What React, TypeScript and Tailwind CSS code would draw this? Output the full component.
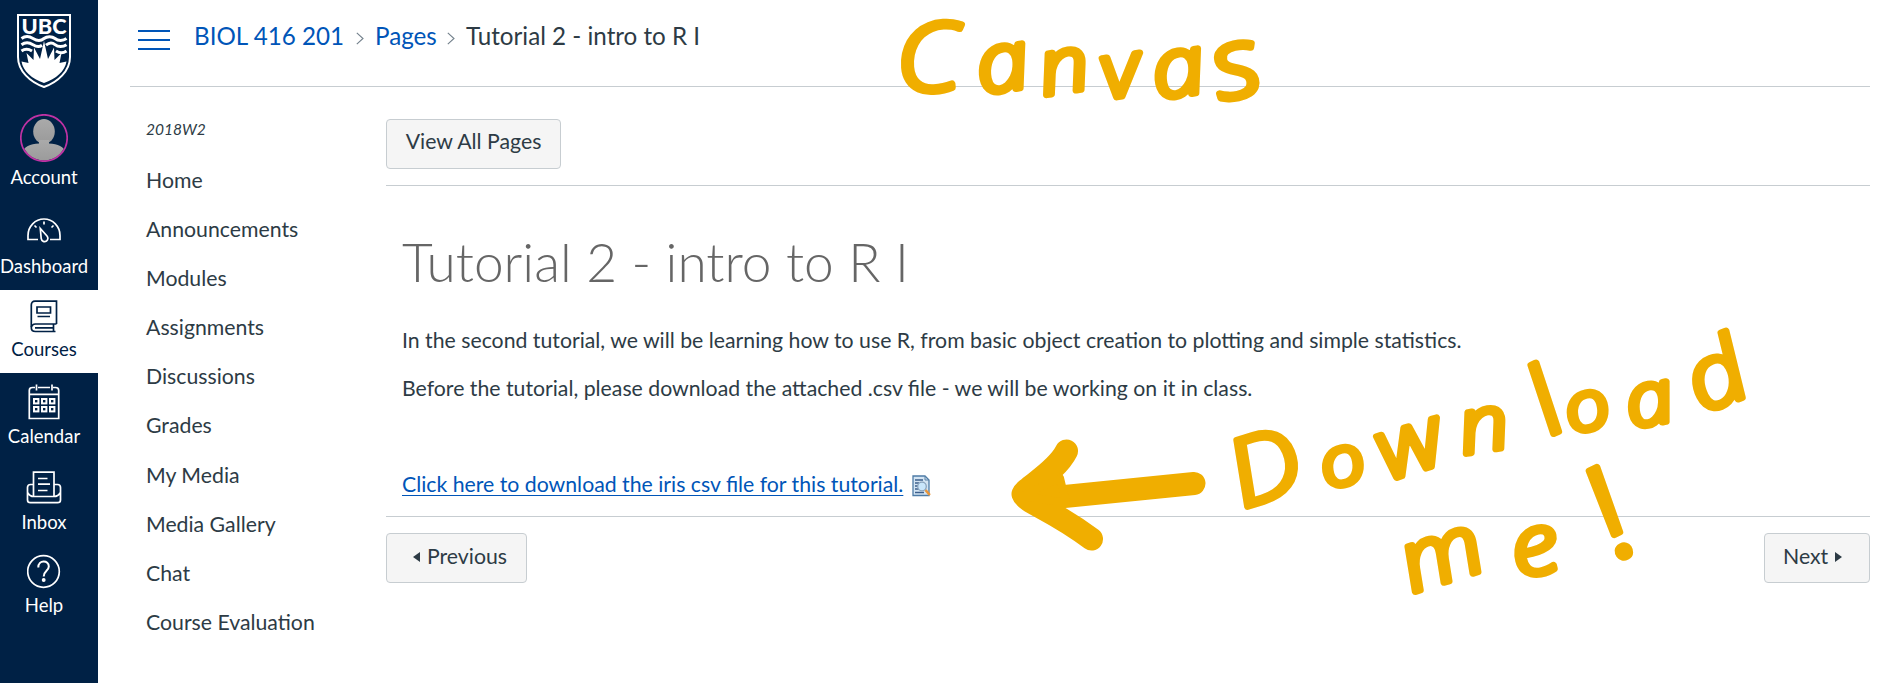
import type { ReactNode } from 'react';

const INK = '#f0ae00';

function Shield() {
  return (
    <svg width="56" height="76" viewBox="0 0 56 76" fill="none">
      <path d="M2 2H54V44C54 58 42 69 28 74C14 69 2 58 2 44Z" stroke="#fff" strokeWidth="2" />
      <text x="28" y="20.800" textAnchor="middle" fontFamily="Lato" fontWeight="900" fontSize="20.5" textLength="45" lengthAdjust="spacingAndGlyphs" fill="#fff">UBC</text>
      <g stroke="#fff" strokeWidth="3">
        <path d="M5.500 25.500C9 23 13 23 17 25.500S25 28 28 25.500S36 23 39 25.500S47 28 50.500 25.500" />
        <path d="M5.500 31.700C9 29.200 13 29.200 17 31.700S24 33.700 26 32.200M30 32.200C33 29.700 36 29.200 39 31.700S47 34.200 50.500 31.700" />
        <path d="M5.500 38C9 35.500 12 35.500 16 38M40 38C43 40 47 40.500 50.500 38" />
      </g>
      <path d="M28 28L32 46L38 34.500L38.500 47L45.500 40L43.500 50L50.500 48.500C49 58 40 66 28 70C16 66 7 58 5.500 48.500L12.500 50L10.500 40L17.500 47L18 34.500L24 46Z" fill="#fff" />
    </svg>
  );
}

function Avatar() {
  return (
    <svg width="48" height="48" viewBox="0 0 48 48">
      <defs>
        <clipPath id="face"><circle cx="24" cy="24" r="22.500" /></clipPath>
        <linearGradient id="grey" x1="0" y1="0" x2="0" y2="1">
          <stop offset="0" stopColor="#aaa" />
          <stop offset="1" stopColor="#9a9a9a" />
        </linearGradient>
      </defs>
      <g clipPath="url(#face)" fill="url(#grey)">
        <ellipse cx="24" cy="17.500" rx="10.800" ry="12.500" />
        <path d="M19 26H29V29.500C38 30 44 33 46 38V48H2V38C4 33 10 30 19 29.500Z" />
      </g>
      <circle cx="24" cy="24" r="23.200" fill="none" stroke="#bf32a4" strokeWidth="1.700" />
    </svg>
  );
}

function Gauge() {
  return (
    <svg width="36" height="25" viewBox="0 0 36 25" fill="none" stroke="#fff" strokeWidth="1.700">
      <path d="M12 21.500H2V17.500A16 16.500 0 0 1 34 17.500V21.500H24" />
      <path d="M18 3.500V6.500M8.500 7.500L10.500 9.500M27.500 7.500L25.500 9.500" />
      <path d="M14.300 10.500L15.200 20.500C15.700 23.500 18.500 24.300 20.500 23C22.300 21.700 22.200 19.500 21 18Z" />
    </svg>
  );
}

function Book() {
  return (
    <svg width="28" height="33" viewBox="0 0 28 33" fill="none" stroke="#002145" strokeWidth="1.700">
      <path d="M26.500 24V1.200H5C2.500 1.200 1.300 3 1.300 5V27" />
      <path d="M26.500 24H5.500C3 24 1.300 25.500 1.300 27.800S3 31.500 5.500 31.500H25.500M23.500 24V31.500M23 27.800H5" />
      <path d="M7 7H20.500V13H7ZM7.500 16.500H20" />
    </svg>
  );
}

function CalendarIcon() {
  const cells = [0, 8, 16].flatMap((x) => [0, 8].map((y) => [x, y]));
  return (
    <svg width="32" height="36" viewBox="0 0 32 36" fill="none" stroke="#fff" strokeWidth="1.700">
      <path d="M7 3.500H4.500C2.500 3.500 1.300 4.500 1.300 6.500V34.500H30.700V6.500C30.700 4.500 29.500 3.500 27.500 3.500H25M10 3.500H22M8.500 0.500V6.500M24 0.500V6.500M1.300 10.300H30.700" />
      {cells.map(([x, y]) => (
        <rect key={`${x}-${y}`} x={6 + x} y={15 + y} width="4.400" height="4.400" strokeWidth="2" />
      ))}
    </svg>
  );
}

function Tray() {
  return (
    <svg width="36" height="33" viewBox="0 0 36 33" fill="none" stroke="#fff" strokeWidth="1.700">
      <path d="M7.500 25.500V1.200H28V25.500M12 7.500H21.500M12 13.200H24M12 19.500H21.500" />
      <path d="M7.500 13.500H4.500C2.500 13.500 1.500 14.500 1.500 16.500V29C1.500 31 2.500 31.700 4.500 31.700H31.500C33.500 31.700 34.500 31 34.500 29V16.500C34.500 14.500 33.500 13.500 31.500 13.500H28M1.500 21.500C3 24 5 25.500 7.500 25.500H28C31 25.500 33 24 34.500 21.500" />
    </svg>
  );
}

function HelpIcon() {
  return (
    <svg width="35" height="35" viewBox="0 0 35 35" fill="none" stroke="#fff" strokeWidth="1.700">
      <circle cx="16.500" cy="17.500" r="15.800" />
      <path d="M11.300 13.500C11.300 5.500 22 6 21.800 12.500C21.700 17 16.700 16.500 16.700 22.500" strokeWidth="2" />
      <circle cx="16.700" cy="26" r="1.100" fill="#fff" />
    </svg>
  );
}

function NavItem({ label, icon, box, text = 'text-white' }: { label: string; icon: ReactNode; box: string; text?: string }) {
  return (
    <a className={`flex w-full flex-col pr-[10px] ${box} ${text}`}>
      <span className="flex justify-center">{icon}</span>
      <span className="text-center text-[18.500px] leading-[22px] whitespace-nowrap">{label}</span>
    </a>
  );
}

function Separator() {
  return (
    <svg width="8" height="13" viewBox="0 0 8 13" fill="none" stroke="#73818c" strokeWidth="1.100">
      <path d="M0.800 0.800L7 6.500L0.800 12.200" />
    </svg>
  );
}

function PreviewIcon() {
  return (
    <svg width="19" height="22" viewBox="0 0 19 22" fill="none">
      <path d="M1 1H13L17 5V20.500H1Z" fill="#d3e4f3" stroke="#4d7ba6" strokeWidth="1.300" />
      <path d="M13 1V5H17" stroke="#5b82a6" />
      <path d="M3 5H11M3 8H7M3 11H6M3 14H7M3 17.500H12" stroke="#3d5f8c" strokeWidth="1.300" />
      <circle cx="10" cy="11.500" r="4.300" fill="#c9e6fb" stroke="#8aa3bd" strokeWidth="1.300" />
      <path d="M13.500 15L17.800 20" stroke="#e8953a" strokeWidth="2.600" />
    </svg>
  );
}

const MENU = ['Home', 'Announcements', 'Modules', 'Assignments', 'Discussions', 'Grades', 'My Media', 'Media Gallery', 'Chat', 'Course Evaluation'];

const BUTTON = 'flex h-[50px] items-center rounded-[4px] border border-[#c7cdd1] bg-[#f5f5f5] text-[21.250px]';

function Annotations() {
  return (
    <svg className="pointer-events-none absolute inset-0" width="1883" height="683" viewBox="0 0 1883 683" fill="none">
      <path d="M1066.500 451C1056 472 1026 487 1023 494C1026 503 1050 508 1091.500 539M1194 483.500L1040 499" stroke={INK} strokeWidth="23" strokeLinecap="round" strokeLinejoin="round" />
      <path d="M1022 496L1060 478L1066 503Z" fill={INK} stroke={INK} strokeWidth="8" strokeLinejoin="round" />
      <g transform="scale(1.15 1)" fill={INK} stroke={INK} strokeWidth="6.500" strokeLinejoin="round" fontFamily="'Open Sans', sans-serif" fontWeight="300" fontStyle="italic">
        <text x="781 853.5 908 962 1006.3 1061.6" y="93 94 95.3 98.8 99 101" rotate="-4 -10 -10 -10 -10 -14" fontSize="82">
          <tspan fontSize="94">C</tspan>a<tspan fontSize="76">nv</tspan>a<tspan fontSize="98">s</tspan>
        </text>
        <text x="1081 1153.4 1208 1273 1348.7 1366.4 1418.8 1480.6" y="508 488.6 480 454 435 433.6 428 413" rotate="-20 -14 -20 -10 -28 -14 -12 -24" fontSize="68">
          <tspan fontSize="92">D</tspan>o<tspan fontSize="84">w</tspan><tspan fontSize="76">n</tspan><tspan fontSize="92">l</tspan>o<tspan fontSize="74">a</tspan><tspan fontSize="88">d</tspan>
        </text>
        <text x="1228.5 1319.6 1407" y="592.6 577.8 559.6" rotate="-20 -12 -30" fontSize="84">
          me<tspan fontSize="125">!</tspan>
        </text>
      </g>
    </svg>
  );
}

export default function App() {
  return (
    <div className="relative flex h-[683px] w-[1883px] overflow-hidden bg-white font-['Lato',sans-serif] text-[#2d3b45]">
      <nav className="flex w-[98px] shrink-0 flex-col bg-[#002145]">
        <div className="flex h-[102px] justify-center pt-[13px] pr-[10px]"><Shield /></div>
        <NavItem label="Account" icon={<Avatar />} box="h-[100px] gap-[4px] pt-[12px]" />
        <NavItem label="Dashboard" icon={<Gauge />} box="h-[88px] gap-[12px] pt-[16px]" />
        <NavItem label="Courses" icon={<Book />} box="h-[83px] gap-[5px] bg-white pt-[10px]" text="text-[#002145]" />
        <NavItem label="Calendar" icon={<CalendarIcon />} box="h-[86px] gap-[5px] pt-[11px]" />
        <NavItem label="Inbox" icon={<Tray />} box="h-[84px] gap-[7px] pt-[12px]" />
        <NavItem label="Help" icon={<HelpIcon />} box="h-[80px] gap-[5px] pt-[11px]" />
      </nav>

      <div className="flex min-w-0 grow flex-col pr-[13px] pl-[32px]">
        <header className="flex h-[87px] items-start border-b border-[#c7cdd1] pl-[8px] text-[24.200px] leading-[30px]">
          <svg className="mt-[29px] w-[32px] shrink-0" height="22" viewBox="0 0 32 22" stroke="#0055b8" strokeWidth="2">
            <path d="M0 2H32M0 11H32M0 20H32" />
          </svg>
          <div className="mt-[21px] ml-[24px] flex items-center whitespace-nowrap">
            <a className="w-[162px] text-[#0055b8]">BIOL 416 201</a>
            <span className="w-[19px] pt-[5px]"><Separator /></span>
            <a className="w-[72px] text-[#0055b8]">Pages</a>
            <span className="w-[19px] pt-[5px]"><Separator /></span>
            <span>Tutorial 2 - intro to R I</span>
          </div>
        </header>

        <div className="flex">
          <aside className="w-[256px] shrink-0 pt-[32px] pl-[16px]">
            <div className="h-[36px] text-[15.500px] leading-[20px] italic">2018W2</div>
            <ul>
              {MENU.map((item) => (
                <li key={item} className="h-[49.100px] pt-[12px] text-[21.250px] leading-[26px]">{item}</li>
              ))}
            </ul>
          </aside>

          <main className="grow">
            <div className="h-[99px] border-b border-[#c7cdd1] pt-[32px]">
              <button className={`${BUTTON} w-[175px] justify-center pb-[4px]`}>View All Pages</button>
            </div>
            <article className="h-[331px] border-b border-[#c7cdd1] px-[16px] pt-[43px]">
              <h1 className="text-[53.200px] leading-[64px] font-light text-[#666]">Tutorial 2 - intro to R I</h1>
              <p className="mt-[31px] text-[21.250px] leading-[32px]">In the second tutorial, we will be learning how to use R, from basic object creation to plotting and simple statistics.</p>
              <p className="mt-[16px] text-[21.250px] leading-[32px]">Before the tutorial, please download the attached .csv file - we will be working on it in class.</p>
              <p className="mt-[64px] flex items-center text-[21.250px] leading-[32px]">
                <a className="text-[#0055b8] underline decoration-1 underline-offset-[3px]">Click here to download the iris csv file for this tutorial.</a>
                <span className="ml-[9px] pt-[4px]"><PreviewIcon /></span>
              </p>
            </article>
            <div className="flex justify-between pt-[16px]">
              <button className={`${BUTTON} w-[141px] gap-[7px] pb-[2px] pl-[26px]`}>
                <svg width="7" height="10" viewBox="0 0 7 10" fill="#2d3b45"><path d="M7 0V10L0 5Z" /></svg>
                Previous
              </button>
              <button className={`${BUTTON} w-[106px] gap-[7px] pb-[2px] pl-[18px]`}>
                Next
                <svg width="7" height="10" viewBox="0 0 7 10" fill="#2d3b45"><path d="M0 0V10L7 5Z" /></svg>
              </button>
            </div>
          </main>
        </div>
      </div>
      <Annotations />
    </div>
  );
}
